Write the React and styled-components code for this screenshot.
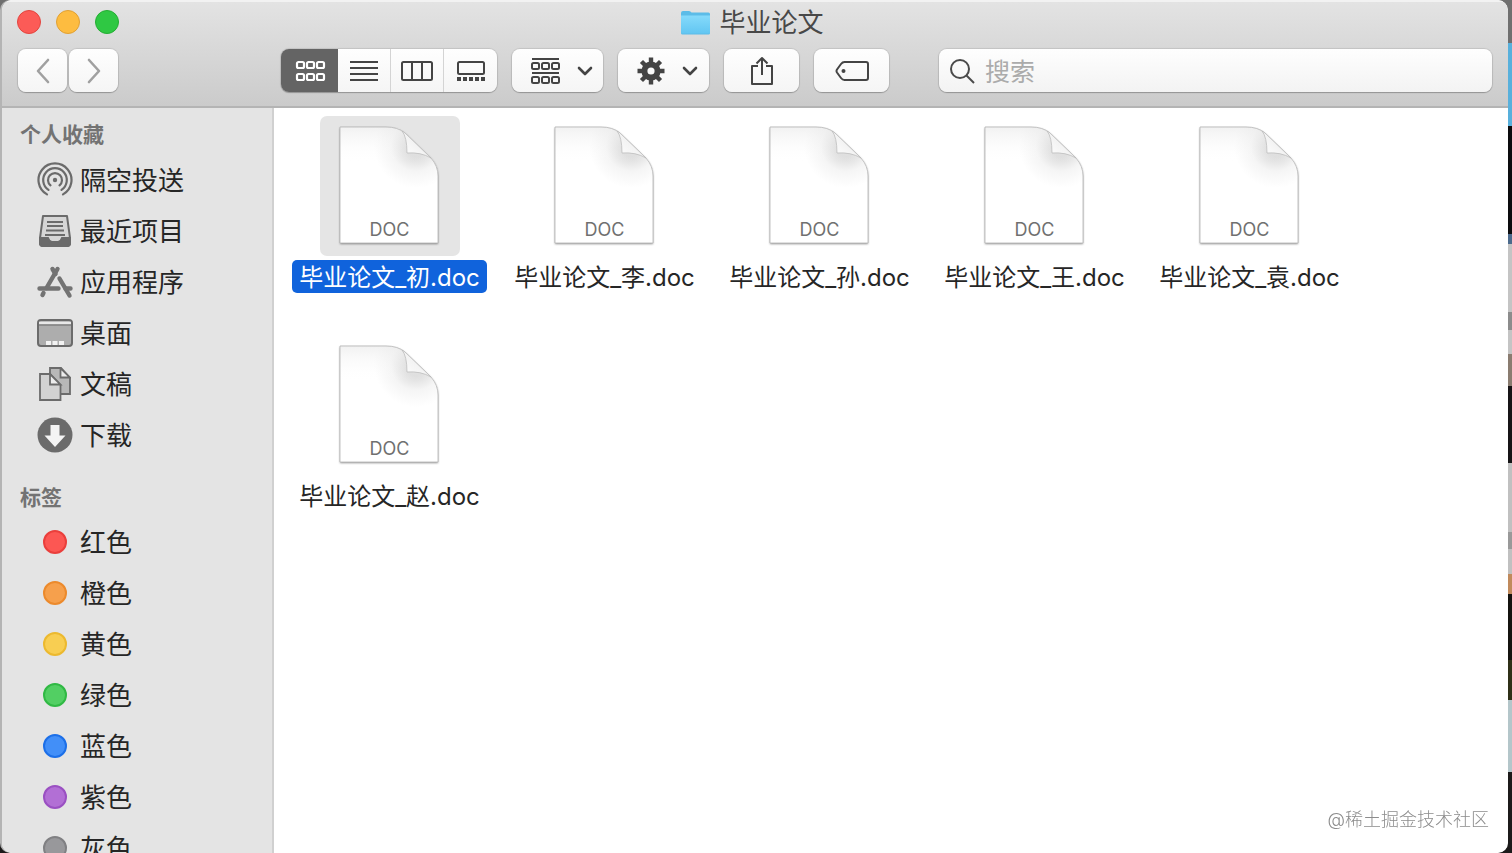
import React from 'react';
import styled, { createGlobalStyle } from 'styled-components';

const sans = '"Inter", "Noto Sans CJK SC", sans-serif';

const GlobalStyle = createGlobalStyle`
  * {
    box-sizing: border-box;
  }
  body {
    margin: 0;
    font-family: ${sans};
    color: #262626;
  }
  button,
  input {
    font-family: inherit;
  }
`;

const Desktop = styled.div`
  height: 100vh;
  padding: 0 4px 0 2px;
  overflow: hidden;
  background: linear-gradient(
    #6f6f6f 0 43px,
    #58b0dc 43px 126px,
    #0c0c0e 126px 234px,
    #4c6a8c 234px 244px,
    #c4c4c4 244px 312px,
    #8c8c8c 312px 330px,
    #c4c4c4 330px 354px,
    #8a7c70 354px 386px,
    #161416 386px 463px,
    #c0c0c0 463px 532px,
    #999 532px 549px,
    #c0c0c0 549px 574px,
    #c08a5c 574px 594px,
    #14130f 594px 660px,
    #2f3018 660px 700px,
    #b4c6ca 700px 772px,
    #1c1a1a 772px
  );
`;

const Window = styled.main`
  height: 100%;
  display: flex;
  flex-direction: column;
  overflow: hidden;
  border-radius: 10px;
  background: #fff;
  box-shadow: 0 0 0 4px #b4b4b4;
  clip-path: inset(0 0 0 -2px round 10px);
`;

const Header = styled.header`
  flex: none;
  height: 108px;
  border-top: 2px solid #f2f2f2;
  border-bottom: 2px solid #b4b4b4;
  background: linear-gradient(#e3e3e3, #cbcbcb);
`;

const TitleBar = styled.div`
  height: 40px;
  padding: 0 21px 0 15px;
  display: grid;
  grid-template-columns: 1fr auto 1fr;
  align-items: center;
`;

const Lights = styled.div`
  display: flex;
  gap: 15px;
`;

const Light = styled.button`
  width: 24px;
  height: 24px;
  padding: 0;
  border: 1px solid ${(p) => p.$edge};
  border-radius: 50%;
  background: ${(p) => p.$color};
`;

const Title = styled.h1`
  margin: 0;
  padding-top: 2px;
  display: flex;
  align-items: center;
  gap: 8px;
  font-size: 26px;
  line-height: 32px;
  font-weight: 400;
  color: #484848;
`;

const Toolbar = styled.div`
  padding: 7px 16px 6px;
  display: flex;
  align-items: center;
  gap: 15px;
`;

const NavGroup = styled.div`
  display: flex;
  gap: 2px;
  margin-right: 148px;
`;

const ToolButton = styled.button`
  width: ${(p) => p.$width}px;
  height: 43px;
  padding: 0;
  display: flex;
  align-items: center;
  justify-content: center;
  border: 0;
  border-radius: 8px;
  background: linear-gradient(#fefefe, #f5f5f5);
  box-shadow: 0 0 1px 1px rgba(0, 0, 0, 0.1), 0 1px 1px rgba(0, 0, 0, 0.2);
  color: #444;
`;

const MenuButton = styled(ToolButton)`
  padding-left: 8px;
  gap: 17px;
`;

const ViewGroup = styled.div`
  display: flex;
  overflow: hidden;
  border-radius: 8px;
  box-shadow: 0 0 1px 1px rgba(0, 0, 0, 0.1), 0 1px 1px rgba(0, 0, 0, 0.2);
`;

const ViewButton = styled.button`
  width: ${(p) => (p.$active ? 57 : 53)}px;
  height: 43px;
  padding: 0;
  display: flex;
  align-items: center;
  justify-content: center;
  border: 0;
  border-right: ${(p) => (p.$last || p.$active ? '0' : '1px solid #d4d4d4')};
  background: ${(p) => (p.$active ? '#646464' : 'linear-gradient(#fefefe, #f5f5f5)')};
  color: ${(p) => (p.$active ? '#fff' : '#444')};
`;

const Search = styled.label`
  flex: 1;
  height: 43px;
  margin-left: 35px;
  padding: 0 10px;
  display: flex;
  align-items: center;
  gap: 10px;
  border-radius: 8px;
  background: linear-gradient(#fefefe, #f3f3f3);
  box-shadow: 0 0 1px 1px rgba(0, 0, 0, 0.1), 0 1px 1px rgba(0, 0, 0, 0.2);
  color: #4a4a4a;
`;

const SearchInput = styled.input`
  flex: 1;
  min-width: 0;
  padding: 2px 0 0;
  border: 0;
  outline: 0;
  background: none;
  font-size: 25px;
  &::placeholder {
    color: #ababab;
    opacity: 1;
  }
`;

const Body = styled.div`
  flex: 1;
  min-height: 0;
  display: flex;
`;

const Sidebar = styled.nav`
  flex: none;
  width: 272px;
  overflow: hidden;
  border-right: 2px solid #d0d0d0;
  background: #e4e4e4;
`;

const Heading = styled.h2`
  margin: 0;
  padding: ${(p) => (p.$spaced ? '22px 18px 4px' : '12px 18px 5px')};
  font-size: 21px;
  line-height: 30px;
  font-weight: 600;
  color: #737373;
`;

const List = styled.ul`
  margin: 0;
  padding: 0;
  list-style: none;
`;

const SideLink = styled.a`
  height: 51px;
  padding: 0 34px;
  display: flex;
  align-items: center;
  gap: 6px;
  font-size: 26px;
  line-height: 36px;
  color: #262626;
  text-decoration: none;
`;

const IconSlot = styled.span`
  width: 38px;
  padding-bottom: 2px;
  display: flex;
  justify-content: center;
`;

const Dot = styled.span`
  width: 24px;
  height: 24px;
  border: 2px solid ${(p) => p.$edge};
  border-radius: 50%;
  background: ${(p) => p.$color};
`;

const Files = styled.section`
  flex: 1;
  padding: 8px;
  display: grid;
  grid-template-columns: repeat(auto-fill, 215px);
  grid-auto-rows: 219px;
  align-content: start;
`;

const File = styled.figure`
  margin: 0;
  display: flex;
  flex-direction: column;
  align-items: center;
  gap: 4px;
`;

const Thumb = styled.div`
  width: 140px;
  height: 140px;
  padding-top: 8px;
  display: grid;
  justify-content: center;
  border-radius: 7px;
  background: ${(p) => (p.$selected ? '#e5e5e5' : 'none')};

  > * {
    grid-area: 1 / 1;
  }
`;

const FileType = styled.span`
  align-self: end;
  padding-bottom: 15px;
  text-align: center;
  font-size: 18px;
  line-height: 22px;
  color: #707070;
`;

const FileName = styled.figcaption`
  padding: 2px 7px 0;
  border-radius: 5px;
  font-size: 24px;
  line-height: 31px;
  white-space: nowrap;
  background: ${(p) => (p.$selected ? '#1063dc' : 'none')};
  color: ${(p) => (p.$selected ? '#fff' : '#262626')};
`;

const Watermark = styled.div`
  position: fixed;
  right: 23px;
  bottom: 20px;
  font-size: 18px;
  line-height: 26px;
  font-weight: 300;
  color: #8c8c8c;
`;

function Squares({ rows }) {
  return rows.map((y) =>
    [1, 11, 21].map((x) => (
      <rect key={`${x}-${y}`} x={x} y={y} width="7" height="6" rx="1.5" />
    ))
  );
}

const GridIcon = () => (
  <svg width="32" height="22" viewBox="-2 0 32 22" fill="none" stroke="currentColor" strokeWidth="2.2">
    <Squares rows={[2, 14]} />
  </svg>
);

const ListIcon = () => (
  <svg width="28" height="22" stroke="currentColor" strokeWidth="2">
    <path d="M0 2h28M0 8h28M0 14h28M0 20h28" />
  </svg>
);

const ColumnsIcon = () => (
  <svg width="32" height="22" fill="none" stroke="currentColor" strokeWidth="2">
    <rect x="1" y="2" width="30" height="18" rx="1.5" />
    <path d="M11 2v18M21 2v18" />
  </svg>
);

const GalleryIcon = () => (
  <svg width="28" height="22" fill="none" stroke="currentColor" strokeWidth="2">
    <rect x="1" y="2" width="26" height="12" rx="1.5" />
    <path d="M0 19h28" strokeWidth="4" strokeDasharray="4 2" />
  </svg>
);

const GroupIcon = () => (
  <svg width="29" height="26" fill="none" stroke="currentColor" strokeWidth="2">
    <path d="M1 1h27M1 15h27" />
    <Squares rows={[5, 19]} />
  </svg>
);

const Chevron = () => (
  <svg width="16" height="10" fill="none" stroke="currentColor" strokeWidth="2.6" strokeLinecap="round" strokeLinejoin="round">
    <path d="M2 2l6 6 6-6" />
  </svg>
);

const GearIcon = () => (
  <svg width="28" height="28" viewBox="-14 -14 28 28" fill="none" stroke="currentColor">
    <circle r="6.6" strokeWidth="6" />
    {[0, 45, 90, 135].map((a) => (
      <path key={a} d="M0-13.5v5M0 13.5v-5" strokeWidth="4.4" transform={`rotate(${a})`} />
    ))}
  </svg>
);

const ShareIcon = () => (
  <svg width="24" height="32" fill="none" stroke="currentColor" strokeWidth="2" strokeLinejoin="round">
    <path d="M8 11H2v18h20V11h-6M12 20V3M6.500 8.500L12 3l5.500 5.500" />
  </svg>
);

const TagIcon = () => (
  <svg width="34" height="22" fill="none" stroke="currentColor" strokeWidth="2" strokeLinejoin="round">
    <path d="M9.500 2H31a2 2 0 0 1 2 2v14a2 2 0 0 1-2 2H9.500Q7.500 20 6 18L2 12.500Q1 11 2 9.500L6 4Q7.500 2 9.500 2z" />
    <circle cx="8.500" cy="11" r="2" fill="currentColor" stroke="none" />
  </svg>
);

const SearchIcon = () => (
  <svg width="26" height="26" fill="none" stroke="currentColor" strokeWidth="2">
    <circle cx="11" cy="11" r="9" />
    <path d="M17.500 17.500L25 25" />
  </svg>
);

const Arrow = ({ d }) => (
  <svg width="16" height="26" fill="none" stroke="#a0a0a0" strokeWidth="2.6" strokeLinecap="round" strokeLinejoin="round">
    <path d={d} />
  </svg>
);

const FolderIcon = () => (
  <svg width="31" height="26" viewBox="0 0 31 26">
    <defs>
      <linearGradient id="folder" x2="0" y2="1">
        <stop stopColor="#85dafb" />
        <stop offset="1" stopColor="#62c6f2" />
      </linearGradient>
    </defs>
    <path d="M1 3q0-2 2-2h6q1.500 0 2.500 1.500h17q1.500 0 1.500 1.500v19q0 1.500-1.500 1.500h-26Q1 24.500 1 23z" fill="#5cbce8" />
    <path d="M1 5.500h29V22q0 1.500-1.500 1.500h-26Q1 23.500 1 22z" fill="url(#folder)" />
  </svg>
);

const AirDropIcon = () => (
  <svg width="36" height="36" viewBox="-18 -18 36 36" fill="none" stroke="#6b6b6b" strokeWidth="2.2" strokeLinecap="round">
    <circle r="2.2" fill="#6b6b6b" stroke="none" />
    <path d="M-8 14.400A16.500 16.500 0 1 1 8 14.400" />
    <path d="M-6.500 9.800A11.800 11.800 0 1 1 6.500 9.800" />
    <path d="M-4.500 5.400A7 7 0 1 1 4.500 5.400" />
  </svg>
);

const RecentsIcon = () => (
  <svg width="32" height="32" fill="none" stroke="#6b6b6b" strokeWidth="2">
    <path d="M4 1h24l3 22v5q0 3-3 3H4q-3 0-3-3v-5z" fill="#d6d6d6" strokeLinejoin="round" />
    <path d="M1 23h8q1.500 4 4 4h6q2.500 0 4-4h8v5q0 3-3 3H4q-3 0-3-3z" fill="#6b6b6b" />
    <path d="M8 7h16M8 11h16M7 15.500h18M6 20h20" strokeWidth="1.8" />
  </svg>
);

const AppsIcon = () => (
  <svg width="36" height="34" fill="none" stroke="#737373" strokeWidth="4.4" strokeLinecap="round">
    <path d="M20.500 4L9.500 23M6.500 28L5.500 30" />
    <path d="M15.500 4l3 5M22.500 13.500L32.500 30.500" />
    <path d="M2.500 23.500h19M28.500 23.500h5" />
  </svg>
);

const DesktopIcon = () => (
  <svg width="36" height="28">
    <rect x="1" y="1" width="34" height="26" rx="3" fill="#adadad" stroke="#6b6b6b" strokeWidth="2" />
    <path d="M2 4h32" stroke="#e8e8e8" strokeWidth="2.5" />
    <path d="M2 6h32" stroke="#6b6b6b" />
    <path d="M9 24h18" stroke="#f2f2f2" strokeWidth="4" strokeDasharray="5 1.5" />
  </svg>
);

const DocumentsIcon = () => (
  <svg width="32" height="34" stroke="#6b6b6b" strokeWidth="1.8">
    <path d="M11 1h11l9 10v16H11z" fill="#b8b8b8" />
    <path d="M21.500 1v9.500H31z" fill="#ececec" />
    <path d="M1 7h10l10.500 11v15H1z" fill="#d2d2d2" />
    <path d="M11 7v10.500h10.500z" fill="#ececec" />
  </svg>
);

const DownloadsIcon = () => (
  <svg width="36" height="36">
    <circle cx="18" cy="18" r="17.5" fill="#6b6b6b" />
    <path d="M13.500 8h9v10.500h6L18 30 7.500 18.500h6z" fill="#f4f4f4" />
  </svg>
);

const sheet = 'M4 3h46q12 0 19 6l26 25q7 8 7 18v67H4z';

function PageIcon() {
  return (
    <svg width="107" height="126">
      <defs>
        <radialGradient id="pageShade" gradientUnits="userSpaceOnUse" cx="80" cy="22" r="42">
          <stop offset="0.25" stopColor="#dcdcdc" />
          <stop offset="0.6" stopColor="#f5f5f5" />
          <stop offset="1" stopColor="#fff" />
        </radialGradient>
        <linearGradient id="pageTop" x2="0" y2="1">
          <stop stopColor="#e8e8e8" stopOpacity="0.6" />
          <stop offset="0.3" stopColor="#fff" stopOpacity="0" />
        </linearGradient>
        <linearGradient id="pageFold" x1="0" y1="1" x2="0.6" y2="0.4">
          <stop stopColor="#fff" />
          <stop offset="1" stopColor="#f0f0f0" />
        </linearGradient>
        <filter id="pageShadow" x="-10%" y="-10%" width="120%" height="120%">
          <feDropShadow dx="0" dy="1" stdDeviation="1" floodOpacity="0.45" />
        </filter>
      </defs>
      <path d={sheet} fill="#fff" filter="url(#pageShadow)" />
      <path d={sheet} fill="url(#pageShade)" />
      <path d={sheet} fill="url(#pageTop)" stroke="#b4b4b4" strokeWidth="0.8" />
      <path d="M66 7q5 6 5 22 14-1 24 5L69 9z" fill="url(#pageFold)" stroke="#b8b8b8" strokeWidth="0.7" />
    </svg>
  );
}

const places = [
  ['隔空投送', AirDropIcon],
  ['最近项目', RecentsIcon],
  ['应用程序', AppsIcon],
  ['桌面', DesktopIcon],
  ['文稿', DocumentsIcon],
  ['下载', DownloadsIcon],
];

const tags = [
  ['红色', '#fc5753', '#ea3f3c'],
  ['橙色', '#f6a04c', '#ec8a2c'],
  ['黄色', '#f8ce52', '#ecb92f'],
  ['绿色', '#52cf63', '#30b944'],
  ['蓝色', '#428ff8', '#1c6fe8'],
  ['紫色', '#b26fd5', '#9a50c2'],
  ['灰色', '#98989b', '#808083'],
];

const files = ['初', '李', '孙', '王', '袁', '赵'];

function App() {
  return (
    <Desktop>
      <GlobalStyle />
      <Window>
        <Header>
          <TitleBar>
            <Lights>
              <Light aria-label="关闭" $color="#fc5b57" $edge="#e2453f" />
              <Light aria-label="最小化" $color="#fdbc40" $edge="#e0a033" />
              <Light aria-label="缩放" $color="#2fc843" $edge="#24ad33" />
            </Lights>
            <Title>
              <FolderIcon />
              毕业论文
            </Title>
          </TitleBar>
          <Toolbar>
            <NavGroup>
              <ToolButton $width={49} aria-label="后退">
                <Arrow d="M13 2L3 13l10 11" />
              </ToolButton>
              <ToolButton $width={49} aria-label="前进">
                <Arrow d="M3 2l10 11L3 24" />
              </ToolButton>
            </NavGroup>
            <ViewGroup>
              <ViewButton $active aria-label="图标">
                <GridIcon />
              </ViewButton>
              <ViewButton aria-label="列表">
                <ListIcon />
              </ViewButton>
              <ViewButton aria-label="分栏">
                <ColumnsIcon />
              </ViewButton>
              <ViewButton $last aria-label="画廊">
                <GalleryIcon />
              </ViewButton>
            </ViewGroup>
            <MenuButton $width={91} aria-label="分组">
              <GroupIcon />
              <Chevron />
            </MenuButton>
            <MenuButton $width={91} aria-label="操作">
              <GearIcon />
              <Chevron />
            </MenuButton>
            <ToolButton $width={75} aria-label="共享">
              <ShareIcon />
            </ToolButton>
            <ToolButton $width={75} aria-label="标签">
              <TagIcon />
            </ToolButton>
            <Search>
              <SearchIcon />
              <SearchInput type="search" placeholder="搜索" aria-label="搜索" />
            </Search>
          </Toolbar>
        </Header>
        <Body>
          <Sidebar>
            <Heading>个人收藏</Heading>
            <List>
              {places.map(([name, Icon]) => (
                <li key={name}>
                  <SideLink href="#">
                    <IconSlot>
                      <Icon />
                    </IconSlot>
                    {name}
                  </SideLink>
                </li>
              ))}
            </List>
            <Heading $spaced>标签</Heading>
            <List>
              {tags.map(([name, color, edge]) => (
                <li key={name}>
                  <SideLink href="#">
                    <IconSlot>
                      <Dot $color={color} $edge={edge} />
                    </IconSlot>
                    {name}
                  </SideLink>
                </li>
              ))}
            </List>
          </Sidebar>
          <Files>
            {files.map((name, index) => (
              <File key={name}>
                <Thumb $selected={index === 0}>
                  <PageIcon />
                  <FileType>DOC</FileType>
                </Thumb>
                <FileName $selected={index === 0}>毕业论文_{name}.doc</FileName>
              </File>
            ))}
          </Files>
        </Body>
      </Window>
      <Watermark>@稀土掘金技术社区</Watermark>
    </Desktop>
  );
}

export default App;
